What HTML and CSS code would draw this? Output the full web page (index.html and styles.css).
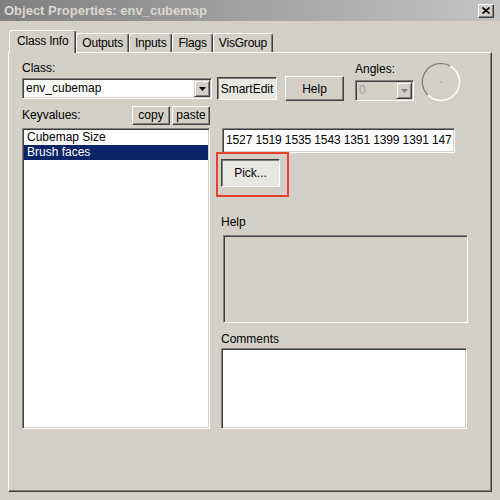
FILE: index.html
```html
<!DOCTYPE html>
<html lang="en">
<head>
    <meta charset="UTF-8">
    <meta name="viewport" content="width=device-width, initial-scale=1.0">
    <title>Object Properties</title>
    <link rel="stylesheet" href="styles.css">
</head>
<body>
    <!-- Barra de título -->
    <div class="titlebar">
        <span class="title">Object Properties: env_cubemap</span>
        <span class="close-btn">
            <svg width="8" height="7" viewBox="0 0 8 7"><path d="M0.5 0.5 L7.5 6.5 M7.5 0.5 L0.5 6.5" stroke="#000" stroke-width="1.6"/></svg>
        </span>
    </div>

    <!-- Pestañas -->
    <div class="tabs">
        <div class="tab active">Class Info</div>
        <div class="tab">Outputs</div>
        <div class="tab">Inputs</div>
        <div class="tab">Flags</div>
        <div class="tab">VisGroup</div>
    </div>

    <div class="panel">
        <div class="top-row">
            <div class="class-field">
                <div class="label">Class:</div>
                <div class="combo">
                    <span class="combo-text">env_cubemap</span>
                    <span class="combo-arrow">
                        <svg width="7" height="4" viewBox="0 0 7 4"><path d="M0 0 H7 L3.5 4 Z" fill="#000"/></svg>
                    </span>
                </div>
            </div>
            <div class="btn pressed smartedit-btn">SmartEdit</div>
            <div class="btn help-btn">Help</div>
            <div class="angles-field">
                <div class="label">Angles:</div>
                <div class="combo disabled">
                    <span class="combo-text">0</span>
                    <span class="combo-arrow">
                        <svg width="7" height="4" viewBox="0 0 7 4"><path d="M0 0 H7 L3.5 4 Z" fill="#808080"/></svg>
                    </span>
                </div>
            </div>
            <svg class="angle-dial" width="40" height="40" viewBox="0 0 40 40">
                <circle cx="20" cy="20" r="18.5" fill="none" stroke="#fff" stroke-width="1.5"/>
                <path d="M6.9 33.1 A18.5 18.5 0 0 1 29.25 3.98" fill="none" stroke="#808080" stroke-width="1.5"/>
                <circle cx="20" cy="20" r="0.8" fill="#a0a0a0"/>
            </svg>
        </div>

        <div class="main-row">
            <div class="left-col">
                <div class="kv-header">
                    <span class="label">Keyvalues:</span>
                    <div class="btn small-btn copy-btn">copy</div>
                    <div class="btn small-btn">paste</div>
                </div>
                <div class="kv-list">
                    <div class="kv-item">Cubemap Size</div>
                    <div class="kv-item selected">Brush faces</div>
                </div>
            </div>

            <div class="right-col">
                <div class="value-field">1527 1519 1535 1543 1351 1399 1391 147</div>
                <div class="highlight">
                    <div class="btn pressed pick-btn">Pick...</div>
                </div>
                <div class="label help-label">Help</div>
                <div class="help-box"></div>
                <div class="label comments-label">Comments</div>
                <div class="comments-box"></div>
            </div>
        </div>
    </div>
</body>
</html>
```

FILE: styles.css
```css
/* Estilo general del diálogo */
body {
    margin: 0;
    background-color: #d4d0c8;
    font-family: "Liberation Sans", Arial, sans-serif;
    font-size: 12px;
    color: #000;
}

.titlebar {
    display: flex;
    align-items: center;
    height: 21px;
    background: linear-gradient(to right, #808080, #c4c4c4);
}

.title {
    padding-left: 4px;
    font-weight: bold;
    font-size: 13px;
    color: #dcd8d0;
}

.close-btn {
    display: flex;
    align-items: center;
    justify-content: center;
    margin-left: auto;
    margin-right: 6px;
    width: 16px;
    height: 14px;
    box-sizing: border-box;
    background-color: #d4d0c8;
    border: 1px solid;
    border-color: #fff #404040 #404040 #fff;
    box-shadow: inset -1px -1px #808080;
}

/* Pestañas */
.tabs {
    display: flex;
    align-items: flex-end;
    margin-top: 9px;
    padding-left: 9px;
}

.tab {
    height: 19px;
    line-height: 18px;
    padding: 0 5px;
    border: 1px solid;
    border-bottom: none;
    border-color: #fff #404040 #404040 #fff;
    border-radius: 3px 3px 0 0;
    box-shadow: inset -1px 0 #808080;
    box-sizing: border-box;
    letter-spacing: -0.2px;
}

.tab.active {
    position: relative;
    z-index: 1;
    height: 23px;
    line-height: 20px;
    margin-bottom: -1px;
    padding: 0 7px;
    background-color: #d4d0c8;
}

/* Panel principal */
.panel {
    margin-left: 8px;
    width: 484px;
    height: 440px;
    box-sizing: border-box;
    padding: 8px 0 0 13px;
    border: 1px solid;
    border-color: #fff #404040 #404040 #fff;
    box-shadow: inset -1px -1px #808080;
}

.label {
    line-height: 14px;
}

.top-row {
    display: flex;
    align-items: flex-start;
}

.class-field {
    width: 190px;
}

.combo {
    display: flex;
    margin-top: 3px;
    height: 21px;
    padding: 1px;
    box-sizing: border-box;
    background-color: #fff;
    border: 1px solid;
    border-color: #808080 #fff #fff #808080;
    box-shadow: inset 1px 1px #404040, inset -1px -1px #d4d0c8;
}

.combo-text {
    flex: 1;
    padding-left: 2px;
    line-height: 17px;
}

.combo-arrow {
    display: flex;
    align-items: center;
    justify-content: center;
    width: 16px;
    height: 17px;
    box-sizing: border-box;
    background-color: #d4d0c8;
    border: 1px solid;
    border-color: #d4d0c8 #404040 #404040 #d4d0c8;
    box-shadow: inset 1px 1px #fff, inset -1px -1px #808080;
}

.combo.disabled {
    background-color: #d4d0c8;
    color: #a0a0a0;
}

/* Botones */
.btn {
    display: flex;
    align-items: center;
    justify-content: center;
    box-sizing: border-box;
    background-color: #d4d0c8;
    border: 1px solid;
    border-color: #fff #404040 #404040 #fff;
    box-shadow: inset -1px -1px #808080;
}

.btn.pressed {
    background-color: #e9e7e2;
    border-color: #404040 #fff #fff #404040;
    box-shadow: inset 1px 1px #808080;
}

.smartedit-btn {
    margin-top: 16px;
    margin-left: 5px;
    width: 60px;
    height: 23px;
}

.help-btn {
    margin-top: 15px;
    margin-left: 8px;
    width: 59px;
    height: 25px;
}

.angles-field {
    margin-top: 1px;
    margin-left: 11px;
    width: 59px;
}

.angles-field .combo {
    margin-top: 4px;
}

.angle-dial {
    margin-top: 1px;
    margin-left: 7px;
}

.main-row {
    display: flex;
    margin-top: 3px;
}

.left-col {
    width: 188px;
}

.kv-header {
    display: flex;
    align-items: center;
    height: 20px;
}

.kv-header .label {
    flex: 1;
}

.small-btn {
    width: 38px;
    height: 19px;
}

.copy-btn {
    margin-right: 2px;
}

.kv-list {
    margin-top: 3px;
    height: 301px;
    padding: 1px;
    box-sizing: border-box;
    background-color: #fff;
    border: 1px solid;
    border-color: #808080 #fff #fff #808080;
    box-shadow: inset 1px 1px #404040, inset -1px -1px #d4d0c8;
}

.kv-item {
    line-height: 15px;
    padding-left: 3px;
}

.kv-item.selected {
    background-color: #0a246a;
    color: #fff;
}

.right-col {
    display: flex;
    flex-direction: column;
    align-items: flex-start;
    margin-left: 11px;
    width: 247px;
}

.value-field {
    margin-top: 23px;
    margin-left: 1px;
    width: 233px;
    height: 25px;
    padding: 0 3px;
    box-sizing: border-box;
    line-height: 23px;
    letter-spacing: -0.12px;
    white-space: nowrap;
    overflow: hidden;
    background-color: #fff;
    border: 1px solid;
    border-color: #808080 #fff #fff #808080;
    box-shadow: inset 1px 1px #404040, inset -1px -1px #d4d0c8;
}

/* Marco rojo alrededor del botón Pick */
.highlight {
    margin-top: -1px;
    margin-left: -5px;
    padding: 5px 7px 8px 3px;
    border: 2px solid #e4432d;
}

.pick-btn {
    width: 59px;
    height: 28px;
}

.help-label {
    margin-top: 18px;
}

.help-box {
    margin-top: 6px;
    margin-left: 2px;
    width: 245px;
    height: 88px;
    box-sizing: border-box;
    border: 1px solid;
    border-color: #808080 #fff #fff #808080;
    box-shadow: inset 1px 1px #404040, inset -1px -1px #d4d0c8;
}

.comments-label {
    margin-top: 9px;
}

.comments-box {
    margin-top: 2px;
    width: 246px;
    height: 81px;
    box-sizing: border-box;
    background-color: #fff;
    border: 1px solid;
    border-color: #808080 #fff #fff #808080;
    box-shadow: inset 1px 1px #404040, inset -1px -1px #d4d0c8;
}
```
